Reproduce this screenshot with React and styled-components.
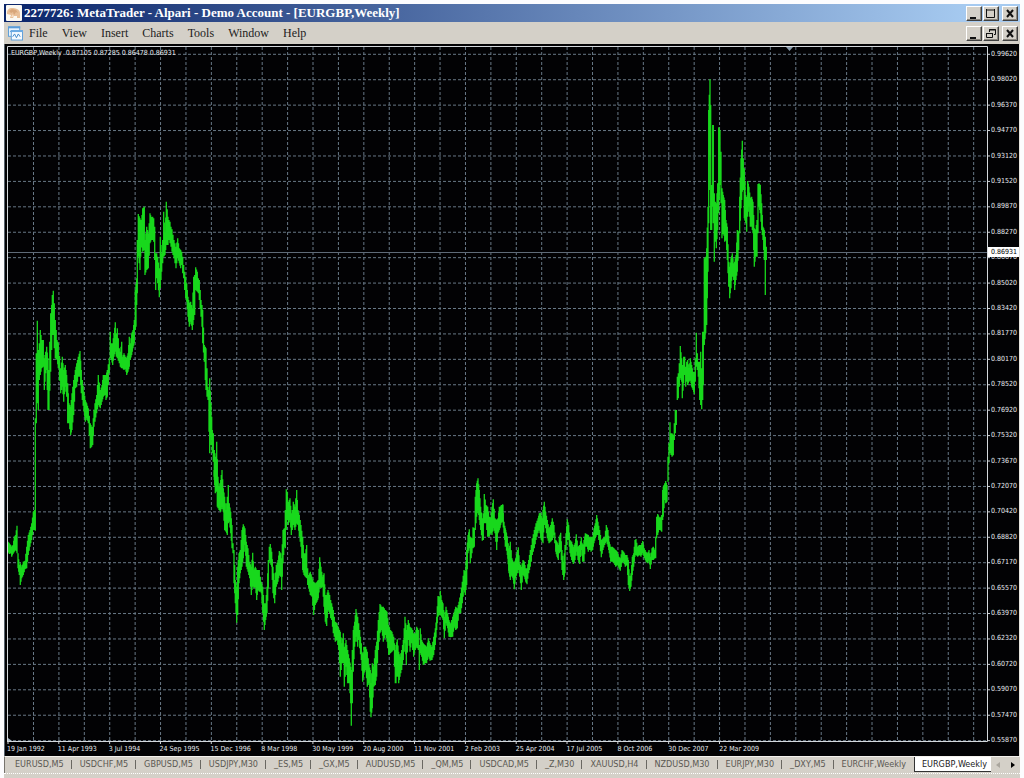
import React from "react";
import styled, { createGlobalStyle } from "styled-components";

const GlobalStyle = createGlobalStyle`
  * { box-sizing: border-box; }
  body { margin: 0; background: #fcfcfe; }
  button { font: inherit; color: inherit; background: none; border: 0; padding: 0; margin: 0; }
`;

const smallFont = `"DejaVu Sans Condensed", "DejaVu Sans", sans-serif`;

const Window = styled.div`
  display: flex;
  flex-direction: column;
  min-height: 100vh;
  padding: 4px 4px 0 4px;
`;

const TitleBar = styled.header`
  display: flex;
  align-items: center;
  height: 18px;
  padding: 0 2px;
  gap: 2px;
  background: linear-gradient(90deg, #0a246a, #a6caf0 95%);
  color: #fff;
`;

const Title = styled.h1`
  margin: 0;
  flex: 1;
  white-space: pre;
  font: bold 13px/18px "Liberation Serif", serif;
`;

const MenuBar = styled.nav`
  display: flex;
  align-items: center;
  height: 22px;
  padding: 0 2px 0 4px;
  background: #d4d0c8;
  color: #1c1c1c;
`;

const MenuList = styled.div`
  display: flex;
  flex: 1;
  gap: 14px;
  padding-left: 6px;
  font: 12px/20px "Liberation Serif", serif;
`;

const Controls = styled.div`
  display: flex;
  gap: 1px;
  button:last-child { margin-left: 2px; }
`;

const ControlButton = styled.button`
  display: flex;
  width: 16px;
  height: 15px;
  background: #d4d0c8;
  border: 1px solid;
  border-color: #fff #404040 #404040 #fff;
  box-shadow: inset -1px -1px 0 #8c8880;
`;

const ChartPane = styled.main`
  flex: 1;
  display: grid;
  grid-template-columns: minmax(0, 1fr) 31px;
  grid-template-rows: minmax(0, 1fr) 14px;
  padding: 2px 0 0 2px;
  background: #020204;
  border-left: 1px solid #56616c;
  border-right: 1px solid #e4e2dc;
  color: #e8ecf0;
  font: 7px/9px ${smallFont};
`;

const Plot = styled.section`
  position: relative;
  min-height: 0;
`;

const PlotDrawing = styled.svg`
  position: absolute;
  inset: 0;
  width: 100%;
  height: 100%;
  overflow: visible;
`;

const Quote = styled.div`
  position: absolute;
  top: 3px;
  left: 4px;
  white-space: pre;
`;

const PriceAxis = styled.div`
  position: relative;
  display: flex;
  flex-direction: column;
  justify-content: space-between;
  padding: 4px 0 0 3px;
  margin-bottom: -3px;
`;

const CurrentPrice = styled.div`
  position: absolute;
  top: 29%;
  left: 0;
  right: 0;
  margin-top: -2px;
  padding-left: 3px;
  background: #fff;
  color: #000;
  line-height: 10px;
`;

const DateAxis = styled.div`
  display: grid;
  grid-template-columns: repeat(19, 7fr) 2fr;
  padding-top: 3px;
  white-space: nowrap;
  span { min-width: 0; }
`;

const TabBar = styled.nav`
  display: flex;
  align-items: stretch;
  height: 17px;
  padding: 0 0 1px 2px;
  background: #d4d0c8;
  border-top: 1px solid #f4f2ee;
  border-left: 1px solid #77746e;
  color: #5a5852;
  font: 9px/13px ${smallFont};
`;

const Tab = styled.button`
  position: relative;
  flex: none;
  padding: 0 8px;
  white-space: nowrap;
  ${(p) =>
    p.$active
      ? `background: #fff; color: #222; border-left: 1px solid #333; border-bottom: 1px solid #333; padding: 0 4px 0 7px;`
      : `&:not(:nth-last-child(4))::after {
           content: ""; position: absolute; right: 0; top: 3px; bottom: 3px; width: 1px; background: #6a6862;
         }`}
`;

const TabScroll = styled.button`
  display: flex;
  align-items: center;
  justify-content: center;
  flex: 1;
  color: ${(p) => (p.disabled ? "#aaa69e" : "#000")};
`;

const StatusEdge = styled.footer`
  height: 5px;
  background: #d4d0c8;
  border-top: 1px dotted #fff;
`;

const menus = ["File", "View", "Insert", "Charts", "Tools", "Window", "Help"];

const prices = [
  "0.99620", "0.98020", "0.96370", "0.94770", "0.93120", "0.91520", "0.89870",
  "0.88270", "0.86670", "0.85020", "0.83420", "0.81770", "0.80170", "0.78520",
  "0.76920", "0.75320", "0.73670", "0.72070", "0.70420", "0.68820", "0.67170",
  "0.65570", "0.63970", "0.62320", "0.60720", "0.59070", "0.57470", "0.55870",
];

const dates = [
  "19 Jan 1992", "11 Apr 1993", "3 Jul 1994", "24 Sep 1995", "15 Dec 1996",
  "8 Mar 1998", "30 May 1999", "20 Aug 2000", "11 Nov 2001", "2 Feb 2003",
  "25 Apr 2004", "17 Jul 2005", "8 Oct 2006", "30 Dec 2007", "22 Mar 2009",
];

const tabs = [
  "EURUSD,M5", "USDCHF,M5", "GBPUSD,M5", "USDJPY,M30", "_ES,M5", "_GX,M5",
  "AUDUSD,M5", "_QM,M5", "USDCAD,M5", "_Z,M30", "XAUUSD,H4", "NZDUSD,M30",
  "EURJPY,M30", "_DXY,M5", "EURCHF,Weekly", "EURGBP,Weekly",
];

// Price bars, "x:high-low", in thirds of a unit from each run's own origin.
const runs = [
  { x: 0, y: 280, bars: "24:785-815 28:790-822 32:795-820 35:800-830 39:795-822 43:770-815 47:765-808 51:737-820 54:820-865 58:855-885 61:850-915 65:862-895 70:845-885 75:842-868 80:800-865 85:765-825 90:750-800 95:730-780 100:695-750 104:690-750 106:415-752 109:220-430 112:122-370 115:210-390 118:190-300 121:150-285 125:180-265 130:180-260 133:235-330 137:215-280 140:200-270 144:235-390 147:270-390 152:100-275 155:75-210 157:45-165 160:32-165 163:70-205 166:120-235 171:180-240 175:190-265 182:265-340 187:230-320 191:270-365 196:255-320 200:285-350 203:310-430 207:370-430 212:380-465 216:340-450 221:300-405 226:270-325 230:250-320 235:230-290 240:213-290 244:270-340 247:300-360 252:335-395 256:360-425 260:370-415 265:385-430 271:430-505 275:440-500 278:440-495 282:390-440 285:370-425 290:345-400 295:285-375 301:330-385 306:315-365 310:285-350 315:285-345 318:285-360 322:270-350 328:235-280 331:155-235 334:190-240 338:190-255 342:160-230 346:127-215 349:160-230 352:145-235 358:205-250 361:215-260 365:185-265 368:230-265 372:220-270 376:230-265 380:235-285 384:220-275 388:170-260 391:190-240 395:160-225 399:150-205 403:120-190 406:75-150 408:20-140" },
  { x: 120, y: 190, bars: "46:300-400 50:265-345 52:150-310 55:72-200 60:85-240 64:95-160 68:55-185 73:50-180 75:150-255 80:110-240 85:130-235 90:70-160 94:82-150 98:80-150 101:85-155 104:110-210 107:190-300 110:190-265 113:200-280 118:235-322 121:140-295 125:190-245 128:150-220 131:65-200 135:130-195 139:35-165 144:80-165 147:90-150 150:95-160 153:110-170 156:118-185 162:150-205 165:160-220 168:170-235 173:145-205 178:175-220 182:180-235 185:185-225 188:200-250 191:225-265 194:245-300 197:260-325 200:280-335 204:320-380 208:340-410 212:335-395 217:355-420 221:260-390 224:255-375 227:232-300 232:245-305 235:265-310 238:270-330 243:330-380 246:345-410 248:360-460 253:465-515 256:470-570 258:475-600 261:535-620 264:590-630 267:600-725 269:565-790 273:640-740 277:720-790 280:730-815 283:780-870 287:800-905 290:755-890 294:860-955" },
  { x: 200, y: 470, bars: "42:0-20 46:0-70 49:0-65 52:20-110 57:50-120 62:30-125 66:0-110 70:55-125 74:80-180 78:120-185 82:80-195 85:45-160 88:100-155 92:125-190 96:165-235 99:220-250 102:240-340 106:330-400 110:350-458 113:290-435 117:250-340 121:240-310 126:180-290 130:163-265 135:175-225 139:215-290 144:235-305 149:275-325 154:290-375 158:248-345 162:300-355 166:290-350 170:300-390 174:300-360 178:300-365 181:320-365 184:335-370 188:350-430 193:400-480 197:400-450 201:350-430 205:270-355 208:230-275 211:222-280 215:245-290 219:290-370 224:330-400 229:285-350 234:270-335 238:243-315 242:250-320 245:265-360 249:180-280 253:175-230 256:120-235 259:58-180 262:65-150 265:95-165 270:85-150 274:130-195 277:120-180 280:95-165 285:110-180 290:60-160 294:120-165 298:135-200 303:165-230 308:200-300 312:250-315 316:250-320 320:225-325 323:295-345 326:315-355 331:305-375 336:320-380 341:335-435 346:340-405 351:335-395 355:330-385 359:262-350 363:290-355 368:320-350 372:310-410 376:375-455 380:375-468 384:360-420 389:375-430 392:390-445 395:400-450 400:420-490 403:440-500 406:455-515 411:460-510 416:475-540 421:485-620 426:520-580 430:490-580 433:530-650 438:510-590 443:540-640 448:565-640 452:590-700 454:600-767 457:540-700 460:480-605 464:455-530 468:417-500 473:440-530 476:460-510 479:480-535 484:520-570 488:570-635 492:530-610 497:530-600 502:545-650 507:585-640 511:600-725 513:640-742 517:580-715 521:590-650 526:540-645 530:515-620 535:450-540 540:402-490 545:410-480 550:410-515 556:420-495 561:425-515 566:465-555 571:480-550 576:485-545 581:500-540 586:540-640" },
  { x: 340, y: 470, bars: "168:525-640 172:508-600 176:545-640 180:560-620 185:540-600 190:510-570 195:440-520 199:480-585 205:450-510 210:470-545 215:475-520 218:480-540 221:490-560 226:490-540 230:470-530 235:480-540 238:525-600 241:475-550 245:510-560 250:520-585 255:525-580 260:530-580 265:505-560 270:520-572 276:530-570 281:500-555 286:475-525 290:440-480 294:378-440 298:380-435 301:362-435 305:390-440 309:400-450 313:440-505 318:410-460 323:430-475 327:450-500 332:460-502 338:440-500 343:425-470 347:410-480 352:415-475 357:395-430 362:370-430 367:335-400 372:300-360 376:305-375 380:240-345 384:195-250 388:178-235 391:200-280 396:205-250 399:172-235 403:175-230 406:80-180 410:40-140 414:25-120 418:60-150 422:110-180 427:145-212 430:130-210 433:72-160 438:105-160 443:110-200 448:140-200 452:145-185 456:110-195 460:88-175 465:145-190 470:150-240 474:145-190 478:110-180 483:110-160 488:103-155 492:155-190 497:180-230 502:200-255 507:240-310 511:215-330 515:265-310 519:275-325 523:280-358 527:265-325 532:240-310 535:232-300 539:280-320 544:290-360 549:270-315 553:275-320 557:300-330 561:295-343 566:270-310 571:240-290 574:225-275 577:205-255 583:180-235 588:160-210 594:145-190" },
  { x: 500, y: 450, bars: "0:172-235 4:165-215 9:165-205 12:220-245 16:235-290 21:258-290 26:310-362 31:280-375 36:325-375 40:340-390 43:345-418 47:330-385 52:300-370 55:292-350 59:340-380 64:350-420 69:330-375 73:335-380 77:355-395 81:355-403 86:330-370 91:300-350 94:285-335 97:268-312 103:240-295 108:220-270 114:205-250 118:190-235 122:188-265 126:205-275 129:180-280 133:155-215 137:185-235 142:210-265 147:235-280 152:225-275 157:205-270 162:225-255 167:270-305 171:275-320 175:285-330 178:260-310 182:248-300 186:300-360 191:335-390 195:285-370 198:250-300 202:208-270 206:225-270 210:270-310 215:275-330 220:290-342 225:280-330 229:253-305 234:290-330 239:285-342 244:262-300 248:295-335 252:270-335 256:250-290 261:253-290 265:255-305 269:265-295 273:260-305 278:260-300 282:235-280 286:220-265 290:195-255 294:215-255 299:240-285 304:270-322 309:265-300 314:260-285 319:225-275 324:240-290 328:275-310 332:290-335 337:290-335 342:295-340 347:300-350 352:305-345 357:320-355 361:325-362 366:300-340 371:305-335 376:315-350 381:315-345 385:330-405 389:385-423 393:370-410 397:320-375 401:310-350 405:270-320 408:267-315 413:290-320 418:285-315 423:285-320 428:273-310 433:295-325 438:305-335 443:310-340 447:300-330 451:320-357 456:295-330 460:290-330 464:300-325 467:260-325 470:200-265 473:192-255 477:200-240 481:205-240 485:195-245" },
  { x: 640, y: 290, bars: "68:600-690 70:590-680 74:580-630 77:573-640 81:585-635 84:500-575 87:460-520 90:397-490 93:430-495 96:430-500 100:435-495 103:400-450 106:360-430 109:360-405 112:260-330 115:250-325 118:220-290 121:168-265 125:205-275 127:250-325 131:200-280 134:200-255 137:230-290 140:215-275 143:210-285 147:235-275 151:205-270 155:225-290 159:245-300 163:245-312 166:205-275 169:128-230 172:190-240 175:215-260 179:215-330 182:185-345 185:235-358 188:125-330 190:125-285" },
  { x: 640, y: 70, bars: "193:565-825 197:560-790 200:535-765 204:410-605 206:120-460 210:28-260 212:105-480 215:345-480 218:165-410 220:165-460 223:370-575 226:395-515 229:400-535 233:340-480 236:172-430 240:180-345 243:245-400 246:355-505 250:375-480 254:390-515 258:450-510 262:470-570 266:575-650 269:590-685 273:565-655 277:550-610 281:580-630 284:575-660 288:555-630 292:480-605 296:485-540 299:380-490 303:265-415 307:212-365 310:265-360 313:295-445 317:375-460 320:380-485 323:333-440 327:350-410 331:385-470 335:380-470 339:395-490 343:475-590 347:480-560 351:450-560 354:342-490 357:340-410 361:345-430 365:400-480 369:470-510 373:480-570 376:500-675 379:530-570" },
];

// A bar halfway between two neighbours closes the gap where they stand apart.
function withMidBars(bars) {
  return bars.flatMap((bar, i) => {
    const next = bars[i + 1];
    return next && next[0] - bar[0] > 3 ? [bar, bar.map((v, k) => (v + next[k]) / 2)] : [bar];
  });
}

const barPath = runs
  .map((run) =>
    withMidBars(run.bars.split(" ").map((bar) => bar.split(/[:-]/).map(Number)))
      .map(([x, high, low]) => {
        const at = (v, origin) => (origin + v / 3).toFixed(1);
        return `M${at(x, run.x)} ${at(high, run.y)}V${at(low, run.y)}`;
      })
      .join("")
  )
  .join("");

const steps = (n, from, step) => Array.from({ length: n }, (_, i) => from + i * step);
const gridX = steps(38, 33.5, 25.41);
const gridY = steps(28, 54.3, 25.42);

function PriceChart() {
  return (
    <PlotDrawing viewBox="7 46 981 696" preserveAspectRatio="none" role="img" aria-label="EURGBP weekly bars">
      <g stroke="#687886" strokeDasharray="3 2" fill="none">
        {gridX.map((x) => <path key={x} d={`M${x} 47V741`} />)}
        {gridY.map((y) => <path key={y} d={`M8 ${y}H987`} />)}
      </g>
      <path d="M8 252.5H988" stroke="#5f6b78" />
      <path d={barPath} stroke="#18d81c" strokeWidth="1.3" fill="none" />
      <path d="M7.5 742V46.5H987.5V741.5H7" stroke="#d4d8dc" fill="none" />
      <path d={gridY.map((y) => `M988 ${y}h2`).join("")} stroke="#d4d8dc" />
      <path d={steps(15, 8, 50.82).map((x) => `M${x} 742v2`).join("")} stroke="#d4d8dc" />
      <path d="M786 47h7l-3.5 4z" fill="#8a9cac" />
      <path d="M8 738v3h4z" fill="#a8bccc" />
    </PlotDrawing>
  );
}

function AppIcon() {
  return (
    <svg width="16" height="16" viewBox="0 0 16 16" aria-hidden="true">
      <rect width="16" height="16" rx="1" fill="#fbf8f2" />
      <path d="M1 8c0-3 2-5 5-5 2 0 3 0 5 1s3 2 3 5v4h-3v-2H8l-1 2H4l1-3-4-1z" fill="#e9bf98" />
      <path d="M3 6l3-2 4 1 2 3-2-1-2 3-1-3-2 1z" fill="#d8a67a" />
      <path d="M5 12l2-3 1 3z" fill="#f7dfc6" />
    </svg>
  );
}

function ChartWindowIcon() {
  return (
    <svg width="15" height="16" viewBox="0 0 16 16" aria-hidden="true">
      <rect x="0.5" y="1.5" width="12" height="10" fill="#e8f4ff" stroke="#5a9cd8" />
      <path d="M0 2h13" stroke="#5a9cd8" strokeWidth="2" />
      <path d="M2 7l2-2 2 2" stroke="#5a9cd8" fill="none" />
      <rect x="3.5" y="5.5" width="12" height="10" fill="#f4faff" stroke="#5a9cd8" />
      <path d="M3 6h13" stroke="#6aaae4" strokeWidth="2" />
      <path d="M5 12l2-3 2 4 2-4 2 3" stroke="#3f86c8" fill="none" />
    </svg>
  );
}

const glyphs = {
  Minimize: <path d="M3 11h6" strokeWidth="2" />,
  Maximize: <path d="M2.5 2v8.5h8V2M2 3h9" />,
  Restore: <path d="M5.5 5V2.5h6V7.5H10M5 3h7M2.5 6v4.5h6V6M2 6.5h7" />,
  Close: <path d="M4 3l6 7M10 3l-6 7" strokeWidth="2" />,
};

function WindowControls({ names, target }) {
  return (
    <Controls>
      {names.map((name) => (
        <ControlButton key={name} aria-label={`${name} ${target}`}>
          <svg width="14" height="13" viewBox="0 0 14 13" fill="none" stroke="#111">{glyphs[name]}</svg>
        </ControlButton>
      ))}
    </Controls>
  );
}

export default function App() {
  return (
    <Window>
      <GlobalStyle />
      <TitleBar>
        <AppIcon />
        <Title>2277726: MetaTrader - Alpari - Demo Account - [EURGBP,Weekly]</Title>
        <WindowControls names={["Minimize", "Maximize", "Close"]} target="window" />
      </TitleBar>
      <MenuBar>
        <ChartWindowIcon />
        <MenuList>
          {menus.map((m) => <button key={m}>{m}</button>)}
        </MenuList>
        <WindowControls names={["Minimize", "Restore", "Close"]} target="chart" />
      </MenuBar>
      <ChartPane>
        <Plot>
          <PriceChart />
          <Quote>EURGBP,Weekly  0.87105 0.87285 0.86478 0.86931</Quote>
        </Plot>
        <PriceAxis>
          {prices.map((p) => <span key={p}>{p}</span>)}
          <CurrentPrice>0.86931</CurrentPrice>
        </PriceAxis>
        <DateAxis>
          {dates.map((d) => <span key={d}>{d}</span>)}
        </DateAxis>
      </ChartPane>
      <TabBar>
        {tabs.map((t) => <Tab key={t} $active={t === "EURGBP,Weekly"}>{t}</Tab>)}
        <TabScroll disabled aria-label="Previous tabs">
          <svg width="4" height="6" viewBox="0 0 4 6"><path d="M4 0v6L0 3z" fill="currentColor" /></svg>
        </TabScroll>
        <TabScroll aria-label="Next tabs">
          <svg width="4" height="6" viewBox="0 0 4 6"><path d="M0 0v6l4-3z" fill="currentColor" /></svg>
        </TabScroll>
      </TabBar>
      <StatusEdge />
    </Window>
  );
}
